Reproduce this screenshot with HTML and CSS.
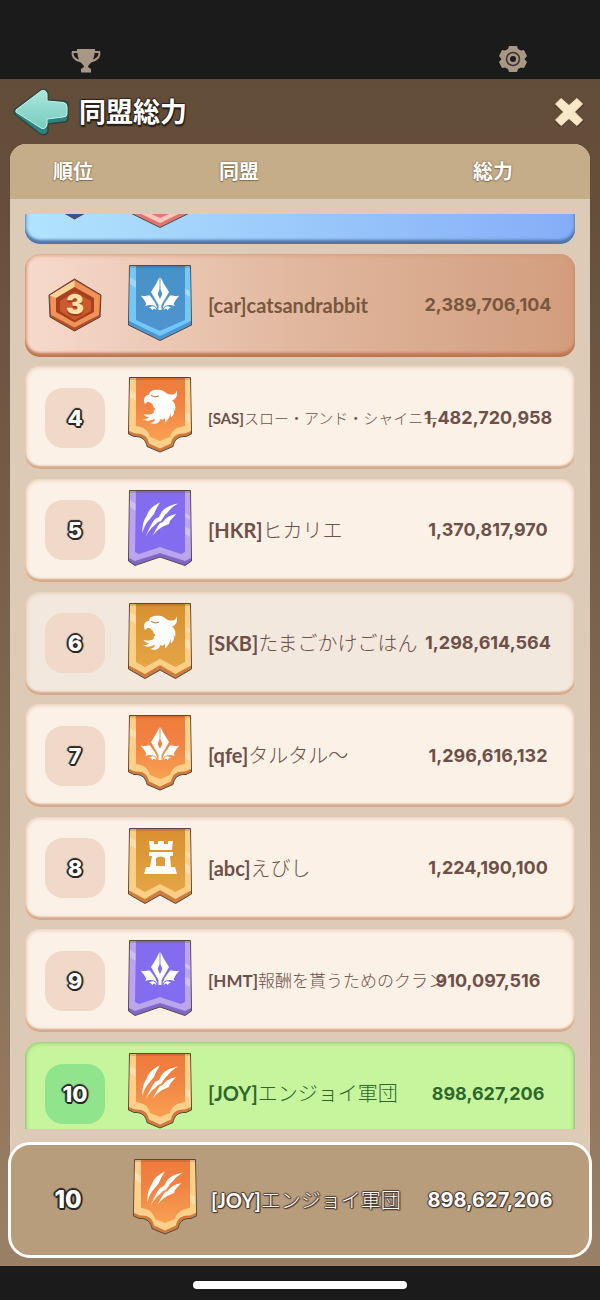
FILE: index.html
```html
<!DOCTYPE html>
<html lang="ja">
<head>
  <meta charset="UTF-8">
  <meta name="viewport" content="width=device-width, initial-scale=1.0">
  <title>同盟総力</title>
  <link rel="stylesheet" href="styles.css">
</head>
<body>

  <!-- Shared shapes: banners, emblems, medal -->
  <svg class="defs" aria-hidden="true">
    <defs>
      <linearGradient id="g-orange" x1="0" y1="0" x2="0" y2="1"><stop offset="0" stop-color="#ef7b3b"/><stop offset=".4" stop-color="#f08243"/><stop offset="1" stop-color="#f9a152"/></linearGradient>
      <linearGradient id="g-gold" x1="0" y1="0" x2="0" y2="1"><stop offset="0" stop-color="#d98f30"/><stop offset="1" stop-color="#e5a544"/></linearGradient>
      <linearGradient id="g-blue" x1="0" y1="0" x2="0" y2="1"><stop offset="0" stop-color="#4690c8"/><stop offset="1" stop-color="#5095cd"/></linearGradient>

      <symbol id="banner-point" viewBox="0 0 64 78">
        <path class="edge" d="M1.500 1.500H62.500L63.500 61 32 76.500.500 61Z"/>
        <path class="trim" d="M2 2H62L63 57 32 72 1 57Z"/>
        <path class="shine" d="M2 13 8 17V24L2 20ZM57 24 62 27V33L57 30Z"/>
        <path class="cloth" d="M8 2H57V56L32 67 8 56Z"/>
        <path class="fold" d="M2 2H62V4H2Z"/>
      </symbol>
      <symbol id="banner-scallop" viewBox="0 0 64 78">
        <path class="edge" d="M1.500 1.500H62.500L63.500 58 58 60.500C49 60 46 65 45 70.500L32 76 19 70.500C18 65 15 60 6 60.500L.500 58Z"/>
        <path class="trim" d="M2 2H62L63 55 57 57.500C47 57 44 62 43 67.500L32 72.500 21 67.500C20 62 17 57 7 57.500L1 55Z"/>
        <path class="shine" d="M2 14 8 18V25L2 21ZM57 36 62 39V47L57 43Z"/>
        <path class="cloth" d="M8 2H57V50C49 51 44 54 42 61L32 65 22 61C20 54 16 51 8 50Z"/>
        <path class="fold" d="M2 2H62V4H2Z"/>
      </symbol>
      <symbol id="banner-notch" viewBox="0 0 64 78">
        <path class="edge" d="M1.500 1.500H62.500L63.500 72 57 76.500 32 68 7 76.500.500 72Z"/>
        <path class="trim" d="M2 2H62L63 69 57 72 32 64 7 72 1 69Z"/>
        <path class="shine" d="M2 11 8 15V22L2 18ZM57 24 62 27V31L57 28ZM57 38 62 40V48L57 45Z"/>
        <path class="cloth" d="M8 2H57V63L53 65 32 58 11 65 7 63Z"/>
        <path class="fold" d="M2 2H62V4H2Z"/>
      </symbol>
      <symbol id="banner-double" viewBox="0 0 64 78">
        <path class="edge" d="M1.500 1.500H62.500L63.500 67 47.500 76.500 32 68 17 76.500.500 67Z"/>
        <path class="trim" d="M2 2H62L63 63.500 47.500 72 32 63 17 72 1 63.500Z"/>
        <path class="shine" d="M2 10 8 14V22L2 18ZM57 24 62 27V31L57 28ZM57 36 62 39V48L57 45Z"/>
        <path class="cloth" d="M8 2H57V60L47.500 65 32 57 17 65 8 60Z"/>
        <path class="fold" d="M2 2H62V4H2Z"/>
      </symbol>

      <symbol id="emblem-lily" viewBox="0 0 64 78">
        <path fill="#fff" fill-rule="evenodd" d="M31.500 13 31.600 25 29.700 30 32 35 34.300 30 32.400 25 32.500 13 36 20 41 28 37 35 33.500 41V46H30.500V41L27 35 23 28 28 20Z"/>
        <path fill="#fff" d="M13 31.500C17 33 19 31 22 31.500 24 35 28 38 29.500 45 27 41 24 40 17 42 19 40 18 39 17 37.500 16 35 14 34 13 31.500ZM51 31.500C47 33 45 31 42 31.500 40 35 36 38 34.500 45 37 41 40 40 47 42 45 40 46 39 47 37.500 48 35 50 34 51 31.500ZM21 44C24 41 28 42 28.500 46.500 27 44.500 25.500 44 24 46.500 24 44.500 23 44 21 44ZM43 44C40 41 36 42 35.500 46.500 37 44.500 38.500 44 40 46.500 40 44.500 41 44 43 44Z"/>
      </symbol>
      <symbol id="emblem-eagle" viewBox="0 0 64 78">
        <path fill="#fff" d="M17 28C15 24 16 20 21 18.500 22 14 27 13.500 33 14 37 15 38 18 42 18.500 45 19 48 18 48.500 14.500 50 19 48.500 23 44 24.500 47 27 48 30 47 35L45 32.500C47 36 46 39 43 41.500L42.500 37C42 41 40 44 37 46.500L37 41C36 44 34 44 32 43 32 47 27 49 22 47 25 46.500 27 45 27 42.500 23 45 18 45.500 15 43 18 43.500 20 42.500 21.500 41 19 41 17 40.500 15.500 38 20 39 25 39 26 36 25 35 26 34 28 33 25 32 26 30 24 28 22 25.500 19.500 25 17 28Z"/>
        <path fill="none" stroke="#c46d32" stroke-width="1" d="M23 19.500 27 21 31 20"/>
      </symbol>
      <symbol id="emblem-claw" viewBox="0 0 64 78">
        <path fill="#fff" d="M32 13.500C26 16 21 20 19 26 15 32 14 38 14.500 44 16 38 18 34 21 31L26 25C27 22 29 18 32 13.500ZM50 14.500C42 16 36 19 33 24L31 28 27 30C23 35 20 42 17.500 48 20 43 24 38 27 36L30 33 33 32 37 26 40 23C42 20 46 17 50 14.500ZM48.500 25C43 26 38 28 35 33L32 34C29 38 27 42 24.500 47 27 43 31 40 34 38L41 35 42 32C44 30 46 27 48.500 25Z"/>
      </symbol>
      <symbol id="emblem-tower" viewBox="0 0 64 78">
        <path fill="#fff" fill-rule="evenodd" d="M21 14H26V17H30V14H36V17H40V14H45L44 23H22ZM21 25H45V29H42L43 40H47L49 47H16L18 40H22L24 29H21ZM28 39H37V31Q32.500 28 28 31Z"/>
      </symbol>

      <symbol id="medal" viewBox="0 0 54 54">
        <path class="medal-rim" d="M26.500 1 53 17 52 39 26.500 53 2 39 1 17Z"/>
        <path class="medal-light" d="M26.500 2.500 2 17.500 26.500 27Z"/>
        <path class="medal-side" d="M26.500 2.500 52 17.500 51 37 26.500 49.500 3 37 2 17.500 26.500 27Z"/>
        <path class="medal-shade" d="M2 17.500 26.500 2.500V9L8 20Z"/>
        <path class="medal-deep" d="M26.500 9 46 20V34L26.500 44.500 8 34V20Z"/>
        <path class="medal-face" d="M26.500 14 43 23V33L26.500 42 12 33V23Z"/>
      </symbol>
    </defs>
  </svg>

  <div class="status-bar">
    <svg class="trophy" viewBox="0 0 30 24" aria-hidden="true">
      <path fill="#a79784" fill-rule="evenodd" d="M6 0H24V2H29C31 9 25 12 21 13 19 15 17 16 17 18L20 20V23.500H10V20L13 18C13 16 11 15 9 13 5 12-1 9 1 2H6ZM2.500 4C2.500 7 4 9 8 10.500 7 8 6.500 6 6.500 4ZM27.500 4H23.500C23.500 6 23 8 22 10.500 26 9 27.500 7 27.500 4Z"/>
    </svg>
    <svg class="gear" viewBox="0 0 28 28" aria-hidden="true">
      <path fill="#a79784" d="M10 1H18L19 4 22 5.500 25 5 28 11 25.500 14 28 17 25 23 22 22.500 19 24 18 27H10L9 24 6 22.500 3 23 0 17 2.500 14 0 11 3 5 6 5.500 9 4Z"/>
      <circle cx="14" cy="14" r="6.500" fill="none" stroke="#3b352e" stroke-width="1.500"/>
      <circle cx="14" cy="14" r="3" fill="#1b1b1b"/>
    </svg>
  </div>

  <main class="window">
    <header class="title-bar">
      <button class="icon-button back" aria-label="戻る">
        <svg viewBox="0 0 56 48" aria-hidden="true">
          <defs><linearGradient id="g-arrow" x1="0" y1="0" x2="0" y2="1"><stop offset="0" stop-color="#a9e6dc"/><stop offset="1" stop-color="#79cbc0"/></linearGradient></defs>
          <path fill="#2c8480" stroke="#35413f" stroke-width="1.500" stroke-linejoin="round" d="M2 21Q0 24 3 27L26 45Q32 49 35 44V36L51 34Q55 34 55 29V18Q55 14 51 13L35 12V5Q33 0 28 2Z"/>
          <path fill="url(#g-arrow)" stroke="#c4f1e9" stroke-width="1" stroke-linejoin="round" d="M3 22 28 3Q33 1 34 6V13L50 14.500Q54 15 54 19V26Q54 29 50 29L34 31V37Q32 42 28 40L3 24Z"/>
        </svg>
      </button>
      <h1>同盟総力</h1>
      <button class="icon-button close" aria-label="閉じる">
        <svg viewBox="0 0 30 30" aria-hidden="true">
          <path fill="#483a29" d="M6 2 15 9.500 24 2 30 8 21.500 16 30 24 24 30 15 22.500 6 30 0 24 8.500 16 0 8Z"/>
          <path fill="#f8e8c8" stroke="#f8e8c8" stroke-width="1" stroke-linejoin="round" d="M7 1.500 15 8.500 23 1.500 28.500 7 20.500 15 28.500 23 23 28.500 15 21.500 7 28.500 1.500 23 9.500 15 1.500 7Z"/>
        </svg>
      </button>
    </header>

    <table class="ranking">
      <thead>
        <tr>
          <th scope="col">順位</th>
          <th scope="col">同盟</th>
          <th scope="col">総力</th>
        </tr>
      </thead>
      <tbody>
        <tr class="row second">
          <td class="rank"><span class="medal silver"><svg><use href="#medal"/></svg></span></td>
          <td class="flag"><svg class="banner red"><use href="#banner-point"/></svg></td>
          <td class="name"></td>
          <td class="power"></td>
        </tr>
        <tr class="row third">
          <td class="rank"><span class="medal bronze"><svg><use href="#medal"/></svg><b>3</b></span></td>
          <td class="flag"><svg class="banner blue"><use href="#banner-point"/><use href="#emblem-lily"/></svg></td>
          <td class="name"><b>[car]catsandrabbit</b></td>
          <td class="power">2,389,706,104</td>
        </tr>
        <tr class="row">
          <td class="rank"><span class="number">4</span></td>
          <td class="flag"><svg class="banner orange"><use href="#banner-scallop"/><use href="#emblem-eagle"/></svg></td>
          <td class="name smallest"><b>[SAS]</b>スロー・アンド・シャイニー</td>
          <td class="power">1,482,720,958</td>
        </tr>
        <tr class="row">
          <td class="rank"><span class="number">5</span></td>
          <td class="flag"><svg class="banner purple"><use href="#banner-notch"/><use href="#emblem-claw"/></svg></td>
          <td class="name"><b>[HKR]</b>ヒカリエ</td>
          <td class="power">1,370,817,970</td>
        </tr>
        <tr class="row pressed">
          <td class="rank"><span class="number">6</span></td>
          <td class="flag"><svg class="banner gold"><use href="#banner-double"/><use href="#emblem-eagle"/></svg></td>
          <td class="name"><b>[SKB]</b>たまごかけごはん</td>
          <td class="power">1,298,614,564</td>
        </tr>
        <tr class="row">
          <td class="rank"><span class="number">7</span></td>
          <td class="flag"><svg class="banner orange"><use href="#banner-scallop"/><use href="#emblem-lily"/></svg></td>
          <td class="name"><b>[qfe]</b>タルタル〜</td>
          <td class="power">1,296,616,132</td>
        </tr>
        <tr class="row">
          <td class="rank"><span class="number">8</span></td>
          <td class="flag"><svg class="banner gold"><use href="#banner-double"/><use href="#emblem-tower"/></svg></td>
          <td class="name"><b>[abc]</b>えびし</td>
          <td class="power">1,224,190,100</td>
        </tr>
        <tr class="row">
          <td class="rank"><span class="number">9</span></td>
          <td class="flag"><svg class="banner purple"><use href="#banner-notch"/><use href="#emblem-lily"/></svg></td>
          <td class="name small"><b>[HMT]</b>報酬を貰うためのクラン</td>
          <td class="power">910,097,516</td>
        </tr>
        <tr class="row mine">
          <td class="rank"><span class="number">10</span></td>
          <td class="flag"><svg class="banner orange"><use href="#banner-scallop"/><use href="#emblem-claw"/></svg></td>
          <td class="name"><b>[JOY]</b>エンジョイ軍団</td>
          <td class="power">898,627,206</td>
        </tr>
      </tbody>
    </table>

    <section class="my-rank">
      <div class="rank">10</div>
      <div class="flag"><svg class="banner orange"><use href="#banner-scallop"/><use href="#emblem-claw"/></svg></div>
      <div class="name"><b>[JOY]</b>エンジョイ軍団</div>
      <div class="power">898,627,206</div>
    </section>
  </main>

  <footer class="home-bar"><span class="home-indicator"></span></footer>

</body>
</html>
```
FILE: styles.css
```css
* {
  box-sizing: border-box;
}

body {
  margin: 0;
  min-height: 100vh;
  display: flex;
  flex-direction: column;
  background: #1b1b1b;
  font-family: "Noto Sans", "Noto Sans CJK JP", sans-serif;
  color: #6f5048;
}

.defs {
  position: absolute;
  width: 0;
  height: 0;
}

/* Top strip */
.status-bar {
  height: 79px;
  padding: 0 73px 6px 71px;
  display: flex;
  justify-content: space-between;
  align-items: flex-end;
}

.trophy {
  width: 30px;
  height: 24px;
}

.gear {
  width: 28px;
  height: 28px;
}

.window {
  flex: 1;
  display: flex;
  flex-direction: column;
  padding-bottom: 8px;
  background: linear-gradient(#624d39 0, #654f3b 10%, #9a8066 100%);
}

.title-bar {
  height: 65px;
  padding: 0 16px 0 13px;
  display: flex;
  align-items: center;
}

.title-bar h1 {
  flex: 1;
  margin: 0 0 0 10px;
  font-size: 27px;
  line-height: 32px;
  font-weight: 700;
  color: #fff;
  text-shadow: -1px 0 1px #2b2119, 1px 0 1px #2b2119, 0 -1px 1px #2b2119, 0 2px 1px #2b2119, 1px 2px 1px #2b2119;
}

.icon-button {
  padding: 0;
  border: 0;
  background: none;
  cursor: pointer;
}

.icon-button svg {
  display: block;
}

.back svg {
  width: 56px;
  height: 48px;
}

.close svg {
  width: 30px;
  height: 30px;
}

/* Ranking table */
.ranking {
  flex: 1;
  display: flex;
  flex-direction: column;
  margin: 0 10px;
  background: #ddcbb8;
  border-radius: 16px 16px 0 0;
  overflow: hidden;
}

.ranking thead {
  display: block;
  background: #c4ad88;
}

.ranking thead tr {
  height: 55px;
  display: grid;
  grid-template-columns: 126px 1fr 194px;
  align-items: center;
}

.ranking th {
  padding: 0;
  font-size: 20px;
  line-height: 28px;
  font-weight: 700;
  color: #fff;
  text-shadow: 0 0 1px #8a7050, 0 1px 1px #8a7050, 0 0 2px #8a7050;
}

.ranking th:nth-child(2) {
  padding-left: 83px;
  text-align: left;
}

.ranking tbody {
  flex: 1;
  display: flex;
  flex-direction: column;
  justify-content: space-between;
  margin: 15px 15px 31px;
  overflow: hidden;
}

.row {
  flex: none;
  height: 103px;
  display: grid;
  grid-template-columns: 100px 70px minmax(0, 1fr) 174px;
  align-items: center;
  border-radius: 15px;
  background: #fcf1e7;
  box-shadow: inset 0 -3px 2px #d5a988, inset 0 0 4px 1px #e6c6ac;
}

/* The list is scrolled a little: the end rows run under its edges */
.row:first-child {
  margin-top: -73px;
}

.row:last-child {
  margin-bottom: -16px;
}

.row.second {
  background: linear-gradient(to right, #b1e4fd, #85adf8);
  box-shadow: inset 0 -4px 3px #4e74a8, inset 0 0 4px 1px #6f9fd6;
}

.row.third {
  background: linear-gradient(to right, #f7dacd, #e1b79e 50%, #d29d7d);
  box-shadow: inset 0 -4px 3px #bd7552, inset 0 0 4px 1px #d99873;
  color: #78573f;
}

.row.pressed {
  background: #f2e8de;
}

.row.mine {
  background: #c7f59d;
  box-shadow: inset 0 -3px 2px #7db45f, inset 0 0 4px 1px #8cc26c;
  color: #2e672c;
}

td {
  padding: 0;
}

.rank {
  display: flex;
  justify-content: center;
}

.number {
  width: 60px;
  height: 60px;
  border-radius: 18px;
  background: #f0d9c8;
  font: 800 22px/60px Inter, sans-serif;
  text-align: center;
  color: #fff;
}

.number,
.my-rank .rank {
  text-shadow: -1px -1px 0 #2a2725, 1px -1px 0 #2a2725, -1px 1px 0 #2a2725, 1px 1px 0 #2a2725, -2px 0 1px #2a2725, 2px 0 1px #2a2725, 0 -2px 1px #2a2725, 0 2px 0 #2a2725, 1px 2px 0 #2a2725;
}

.mine .number {
  background: #90e48c;
}

.medal {
  display: grid;
  place-items: center;
}

.medal svg,
.medal b {
  grid-area: 1 / 1;
}

.medal svg {
  width: 54px;
  height: 54px;
}

.medal b {
  font: 900 27px/30px Inter, sans-serif;
  color: #ffe0a6;
  text-shadow: 0 2px 1px #9c3d1c;
}

.medal-rim {
  fill: var(--rim);
  stroke: #5d4238;
  stroke-width: 1;
}

.medal-light,
.medal-shade {
  fill: var(--light);
}

.medal-side {
  fill: var(--side);
}

.medal-deep {
  fill: var(--deep);
}

.medal-face {
  fill: var(--face);
}

.bronze {
  --rim: #b64e29;
  --light: #fcd596;
  --side: #f09358;
  --deep: #a8401f;
  --face: #cb5b2f;
}

.silver {
  --rim: #33549a;
  --light: #c5dcff;
  --side: #33549a;
  --deep: #4667ad;
  --face: #6a8bd0;
}

.flag {
  align-self: start;
  display: flex;
  justify-content: center;
  padding-top: 10px;
}

.banner {
  width: 64px;
  height: 78px;
}

.edge {
  fill: var(--edge);
  stroke: #55483f;
  stroke-width: 1;
  stroke-linejoin: round;
}

.trim {
  fill: var(--trim);
}

.shine {
  fill: #fff;
  opacity: 0.3;
}

.cloth {
  fill: var(--cloth);
}

.fold {
  fill: #5a3d30;
  opacity: 0.2;
}

.orange {
  --edge: #cf7b3b;
  --trim: #ffd08a;
  --cloth: url(#g-orange);
}

.gold {
  --edge: #cf7d3c;
  --trim: #fdce86;
  --cloth: url(#g-gold);
}

.blue {
  --edge: #4a97d2;
  --trim: #74c8f8;
  --cloth: url(#g-blue);
}

.purple {
  --edge: #8266c8;
  --trim: #b9a6ec;
  --cloth: #836cf0;
}

.red {
  --edge: #dc7674;
  --trim: #fcc6b8;
  --cloth: #e57777;
}

.name {
  padding-left: 13px;
  font-size: 20px;
  line-height: 28px;
  font-weight: 300;
  white-space: nowrap;
}

.name b {
  font-family: Lato, sans-serif;
  font-weight: 700;
}

.name.small {
  font-size: 17px;
}

.name.smallest {
  font-size: 15px;
}

.power {
  font: 700 18px/28px Inter, sans-serif;
  text-align: center;
}

/* Own alliance, pinned under the list */
.my-rank {
  position: relative;
  height: 116px;
  margin: -18px 8px 0;
  display: grid;
  grid-template-columns: 114px 80px minmax(0, 1fr) 198px;
  align-items: center;
  border: 3px solid #fff;
  border-radius: 22px;
  background: #b89d7d;
  color: #fff;
}

.my-rank .rank {
  font: 800 24px/30px Inter, sans-serif;
}

.my-rank .flag {
  padding-top: 13px;
}

.my-rank .name {
  padding-left: 6px;
}

.my-rank .power {
  font-size: 20px;
}

.my-rank .name,
.my-rank .power {
  text-shadow: -1px 0 1px #4a3a30, 1px 0 1px #4a3a30, 0 -1px 1px #4a3a30, 0 1px 1px #4a3a30, 1px 1px 1px #4a3a30;
}

.home-bar {
  height: 34px;
  display: flex;
  justify-content: center;
  align-items: center;
  padding-top: 4px;
}

.home-indicator {
  width: 214px;
  height: 8px;
  border-radius: 4px;
  background: #fff;
}
```
